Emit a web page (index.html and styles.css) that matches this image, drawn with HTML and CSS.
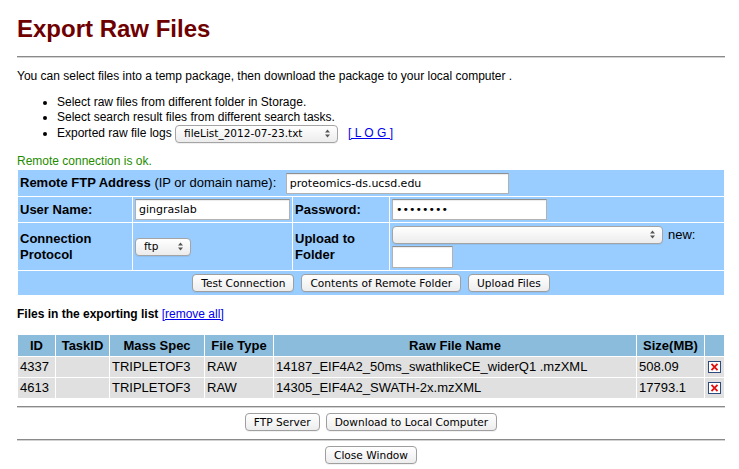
FILE: index.html
```html
<!DOCTYPE html>
<html>
<head>
<meta charset="utf-8">
<title>Export Raw Files</title>
<link rel="stylesheet" href="styles.css">
</head>
<body>
<div class="page">
  <h1 class="title">Export Raw Files</h1>
  <hr class="rule rule-top">
  <p class="intro">You can select files into a temp package, then download the package to your local computer .</p>
  <ul class="tips">
    <li>Select raw files from different folder in Storage.</li>
    <li>Select search result files from different search tasks.</li>
    <li class="tip-log">Exported raw file logs <span class="sel sel-log"><select><option>fileList_2012-07-23.txt</option></select><span class="arr"><svg width="5" height="9" viewBox="0 0 5 9"><path d="M0 3.5L2.5 0.5L5 3.5Z M0 5.5L2.5 8.5L5 5.5Z" fill="#555"/></svg></span></span><a class="log" href="#">[ L O G ]</a></li>
  </ul>
  <p class="ok">Remote connection is ok.</p>
  <table class="ftp">
    <colgroup><col class="c1"><col class="c2"><col class="c3"><col class="c4"></colgroup>
    <tr class="r1">
      <td colspan="4" class="host"><b>Remote FTP Address</b> (IP or domain name): <input class="in in-host" type="text" value="proteomics-ds.ucsd.edu"></td>
    </tr>
    <tr class="r2">
      <th>User Name:</th>
      <td><input class="in in-user" type="text" value="gingraslab"></td>
      <th>Password:</th>
      <td><input class="in in-pass" type="password" value="gingrasl"></td>
    </tr>
    <tr class="r3">
      <th>Connection Protocol</th>
      <td><span class="sel sel-proto"><select><option>ftp</option></select><span class="arr"><svg width="5" height="9" viewBox="0 0 5 9"><path d="M0 3.5L2.5 0.5L5 3.5Z M0 5.5L2.5 8.5L5 5.5Z" fill="#555"/></svg></span></span></td>
      <th>Upload to Folder</th>
      <td class="folder">
        <div class="folder-top"><span class="sel sel-folder"><select><option></option></select><span class="arr"><svg width="5" height="9" viewBox="0 0 5 9"><path d="M0 3.5L2.5 0.5L5 3.5Z M0 5.5L2.5 8.5L5 5.5Z" fill="#555"/></svg></span></span> new:</div>
        <input class="in in-new" type="text" value="">
      </td>
    </tr>
    <tr class="r4">
      <td colspan="4"><div class="actions"><button class="btn">Test Connection</button><button class="btn">Contents of Remote Folder</button><button class="btn">Upload Files</button></div></td>
    </tr>
  </table>
  <p class="files-title">Files in the exporting list <a href="#" class="remove">[remove all]</a></p>
  <table class="files">
    <colgroup><col class="f1"><col class="f2"><col class="f3"><col class="f4"><col class="f5"><col class="f6"><col class="f7"></colgroup>
    <tr class="head">
      <th>ID</th><th>TaskID</th><th>Mass Spec</th><th>File Type</th><th>Raw File Name</th><th>Size(MB)</th><th></th>
    </tr>
    <tr class="row">
      <td>4337</td><td></td><td>TRIPLETOF3</td><td>RAW</td><td>14187_EIF4A2_50ms_swathlikeCE_widerQ1 .mzXML</td><td>508.09</td>
      <td class="del"><svg width="13" height="12" viewBox="0 0 13 12"><rect x="0.5" y="0.5" width="12" height="11" fill="#fff" stroke="#2c4a7c"/><path d="M3.5 2.8L9.5 9.2M9.5 2.8L3.5 9.2" stroke="#e41010" stroke-width="1.8"/></svg></td>
    </tr>
    <tr class="row">
      <td>4613</td><td></td><td>TRIPLETOF3</td><td>RAW</td><td>14305_EIF4A2_SWATH-2x.mzXML</td><td>17793.1</td>
      <td class="del"><svg width="13" height="12" viewBox="0 0 13 12"><rect x="0.5" y="0.5" width="12" height="11" fill="#fff" stroke="#2c4a7c"/><path d="M3.5 2.8L9.5 9.2M9.5 2.8L3.5 9.2" stroke="#e41010" stroke-width="1.8"/></svg></td>
    </tr>
  </table>
  <hr class="rule rule-mid">
  <div class="bottom-actions first"><button class="btn">FTP Server</button><button class="btn">Download to Local Computer</button></div>
  <hr class="rule rule-low">
  <div class="bottom-actions last"><button class="btn">Close Window</button></div>
</div>
</body>
</html>
```

FILE: styles.css
```css
* { box-sizing: border-box; }
html, body { margin: 0; padding: 0; background: #fff; }
body {
  font-family: "Liberation Sans", Arial, Helvetica, sans-serif;
  font-size: 12px;
  color: #000;
}
.page { padding: 0 14px 8px 17px; }

.title {
  margin: 15px 0 0;
  font-size: 24px;
  line-height: 28px;
  font-weight: bold;
  color: #6e0000;
}
.rule {
  height: 0;
  margin: 0;
  border: 0;
  border-top: 1px solid #8a8a8a;
  border-bottom: 1px solid #d2d2d2;
}
.rule-top { margin-top: 13px; }
.rule-mid { margin-top: 7px; }
.rule-low { margin-top: 8px; }

.intro { margin: 11px 0 0; line-height: 15px; }
.tips { margin: 10px 0 0; padding-left: 40px; line-height: 15px; }
.tips li { padding-top: 1px; height: 15px; }
.tips li.tip-log { line-height: 18px; height: 18px; padding-top: 0; }
.log { margin-left: 10px; color: #0000ee; font-size: 12px; }

.sel { position: relative; display: inline-block; vertical-align: middle; }
.sel select {
  -webkit-appearance: none;
  appearance: none;
  display: block;
  height: 18px;
  margin: 0;
  border: 1px solid #a4a4a4;
  border-radius: 4px;
  background: linear-gradient(#ffffff, #ececec);
  font-family: "DejaVu Sans", sans-serif;
  font-size: 10.5px;
  line-height: 14px;
  color: #000;
  padding: 0 0 1px 8px;
  box-shadow: 0 1px 0 rgba(0,0,0,0.06);
}
.sel .arr {
  position: absolute;
  top: 4px;
  right: 8px;
  width: 5px;
  height: 9px;
  line-height: 0;
  pointer-events: none;
}
.sel-log select { width: 163px; }
.sel-proto select { width: 56px; }
.sel-folder select { width: 271px; }

.ok { margin: 12px 0 0; line-height: 15px; color: #1e8c00; }

table { border-collapse: separate; border-spacing: 1px; table-layout: fixed; width: 708px; }
.ftp { margin: 0; font-size: 13px; }
.ftp td, .ftp th {
  background: #99ccff;
  padding: 0 2px;
  line-height: 16px;
  vertical-align: middle;
}
.ftp th { text-align: left; font-weight: bold; }
.c1 { width: 114px; }
.c2 { width: 159px; }
.c3 { width: 96px; }
.c4 { width: 334px; }
.r1 { height: 26px; }
.r2 { height: 25px; }
.r3 { height: 47px; }
.r4 { height: 24px; }

.in {
  vertical-align: middle;
  margin: 0;
  border: 1px solid #b2b2b2;
  border-top-color: #8f8f8f;
  background: #fff;
  font-family: "DejaVu Sans", sans-serif;
  font-size: 11px;
  color: #000;
  padding: 0 3px;
  box-shadow: inset 0 1px 1px rgba(0,0,0,0.08);
}
.in-host { width: 223px; height: 21px; margin-left: 6px; }
.in-user { width: 155px; height: 21px; }
.in-pass { width: 155px; height: 21px; font-size: 11px; }
.in-new { width: 61px; height: 22px; display: block; margin-top: 2px; }
.folder { vertical-align: middle; }
.folder-top { height: 18px; line-height: 18px; display: flex; align-items: center; gap: 5px; }

.actions { display: flex; justify-content: center; gap: 7px; }
.btn {
  height: 18px;
  margin: 0;
  padding: 0 8px;
  border: 1px solid #9f9f9f;
  border-radius: 4px;
  background: linear-gradient(#ffffff, #ededed);
  font-family: "DejaVu Sans", sans-serif;
  font-size: 10.6px;
  line-height: 16px;
  color: #000;
  box-shadow: 0 1px 0 rgba(0,0,0,0.05);
}

.files-title { margin: 11px 0 0; font-weight: bold; line-height: 15px; }
.remove { font-weight: normal; color: #0000ee; }

.files { margin-top: 12px; font-size: 13px; }
.files th, .files td { padding: 0 2px; line-height: 16px; white-space: nowrap; overflow: hidden; }
.files th { background: #8bbcdc; font-weight: bold; text-align: center; }
.files td { background: #e0e0e0; text-align: left; }
.head { height: 21px; }
.row { height: 20px; }
.files td.del { text-align: center; padding: 0; line-height: 0; }
.del svg { display: inline-block; vertical-align: middle; }
.f1 { width: 37px; }
.f2 { width: 53px; }
.f3 { width: 94px; }
.f4 { width: 68px; }
.f5 { width: 362px; }
.f6 { width: 67px; }
.f7 { width: 19px; }

.bottom-actions { display: flex; justify-content: center; gap: 6px; margin-top: 5px; }
```
